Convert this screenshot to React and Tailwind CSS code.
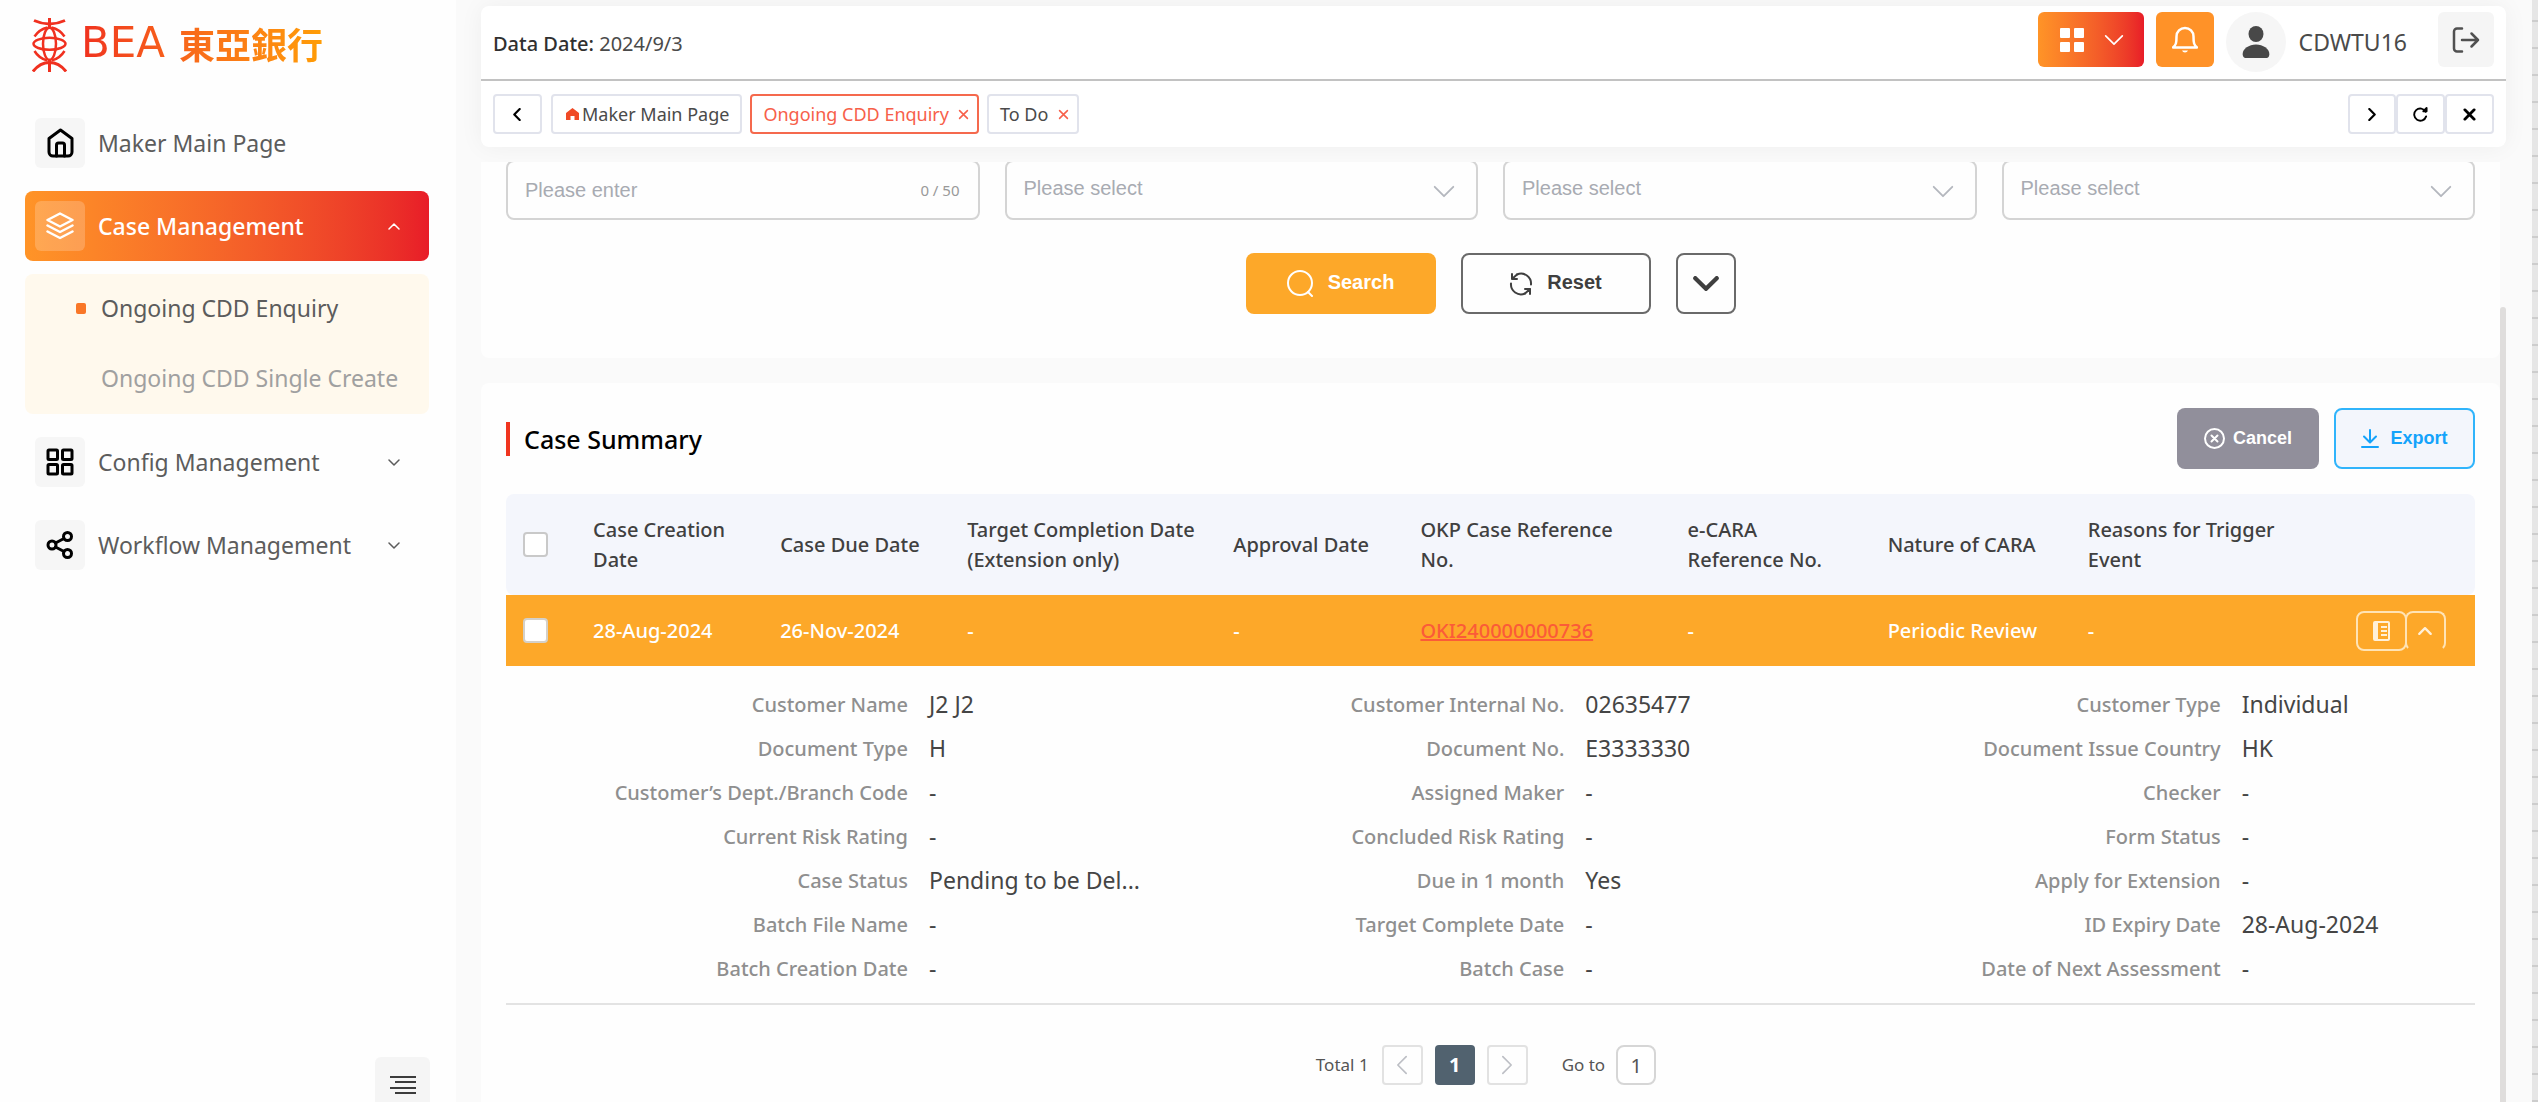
import React from "react";

const NOTO = "font-['Noto_Sans',sans-serif]";
const ARIAL = "font-['Liberation_Sans',Arial,sans-serif]";

function Svg({ className, box = "0 0 24 24", sw = 2, fill = "none", children }) {
  return (
    <svg
      aria-hidden="true"
      className={className}
      viewBox={box}
      fill={fill}
      stroke="currentColor"
      strokeWidth={sw}
      strokeLinecap="round"
      strokeLinejoin="round"
    >
      {children}
    </svg>
  );
}

const ChevronUp = ({ className, sw = 2 }) => (
  <Svg className={className} box="0 0 24 14" sw={sw}><path d="M2 12 12 2l10 10" /></Svg>
);
const ChevronDown = ({ className, sw = 2 }) => (
  <Svg className={className} box="0 0 24 14" sw={sw}><path d="m2 2 10 10L22 2" /></Svg>
);
const ChevronLeft = ({ className, sw = 2 }) => (
  <Svg className={className} box="0 0 14 24" sw={sw}><path d="M12 2 2 12l10 10" /></Svg>
);
const ChevronRight = ({ className, sw = 2 }) => (
  <Svg className={className} box="0 0 14 24" sw={sw}><path d="m2 2 10 10L2 22" /></Svg>
);

const HomeIcon = () => (
  <Svg className="h-[30px] w-[27px]" box="0 0 27 30" sw={3}>
    <path d="M2 10.500 13.500 2 25 10.500V24a4 4 0 0 1-4 4H6a4 4 0 0 1-4-4Z" />
    <path d="M9.500 28V17a2 2 0 0 1 2-2h4a2 2 0 0 1 2 2v11" />
  </Svg>
);
const LayersIcon = () => (
  <Svg className="h-7 w-7" box="0 0 28 28" sw={2.500}>
    <path d="M14 1.500 26.500 8 14 14.500 1.500 8Z" />
    <path d="m1.500 13.500 12.500 6.500 12.500-6.500" />
    <path d="m1.500 19.500 12.500 6.500 12.500-6.500" />
  </Svg>
);
const GridIcon = () => (
  <Svg className="h-7 w-7" box="0 0 28 28" sw={3}>
    <rect x="2" y="2" width="9.500" height="9.500" rx="1" />
    <rect x="16.500" y="2" width="9.500" height="9.500" rx="1" />
    <rect x="2" y="16.500" width="9.500" height="9.500" rx="1" />
    <rect x="16.500" y="16.500" width="9.500" height="9.500" rx="1" />
  </Svg>
);
const ShareIcon = () => (
  <Svg className="h-7 w-7" box="0 0 28 28" sw={3}>
    <circle cx="21.500" cy="5.500" r="4" />
    <circle cx="6" cy="14" r="4" />
    <circle cx="21.500" cy="22.500" r="4" />
    <path d="m9.500 12 8.500-4.500M9.500 16l8.500 4.500" />
  </Svg>
);

function Logo() {
  return (
    <div className="flex h-[54px] items-center pl-8">
      <svg aria-hidden="true" className="h-[54px] w-[35px] text-[#f0301f]" viewBox="0 0 35 54" fill="none" stroke="currentColor" strokeWidth="2.5">
        <path d="M2 2.500Q17.500 9.500 33 2.500" strokeWidth="3" />
        <path d="M17.500 0v10M17.500 42v12" strokeWidth="3" />
        <path d="M2.500 18.500C5.500 14 9 11 15.500 9.500M32.500 18.500C29.500 14 26 11 19.500 9.500" />
        <path d="M2.500 33C5.500 38 9 41 15.500 42.500M32.500 33C29.500 38 26 41 19.500 42.500" />
        <ellipse cx="17.500" cy="25.800" rx="16" ry="6" />
        <ellipse cx="17.500" cy="25.800" rx="6.500" ry="16" />
        <path d="M1 53.500C6 47 11 44.500 17.500 44.500S29 47 34 53.500" strokeWidth="3" />
      </svg>
      <div className="mb-1 ml-[14px] flex items-center gap-[14px] bg-linear-to-r from-[#f0301f] to-[#ff9d05] bg-clip-text text-transparent">
        <span className="font-['DejaVu_Sans',sans-serif] text-[42px] leading-[52px]">BEA</span>
        <span className="font-['Noto_Sans_CJK_TC',sans-serif] text-[36px] leading-[52px] font-bold">東亞銀行</span>
      </div>
    </div>
  );
}

function MenuItem({ icon, label, chevron, active }) {
  return (
    <button
      type="button"
      className={
        active
          ? "flex h-[70px] w-full items-center rounded-lg bg-linear-to-r from-[#ff9427] to-[#e81c28] pr-[29px] pl-[10px] font-medium text-white"
          : "flex h-[70px] w-full items-center rounded-lg pr-[29px] pl-[10px] text-[#5c5c5c]"
      }
    >
      <span
        className={
          active
            ? "flex h-[50px] w-[50px] items-center justify-center rounded-md bg-white/20"
            : "flex h-[50px] w-[50px] items-center justify-center rounded-md bg-[#f6f6f6] text-black"
        }
      >
        {icon}
      </span>
      <span className="ml-[13px] flex-1 text-left text-[23px]">{label}</span>
      {chevron === "up" && <ChevronUp className="h-[7px] w-3" sw={3} />}
      {chevron === "down" && <ChevronDown className="h-[7px] w-3" sw={3} />}
    </button>
  );
}

function Sidebar() {
  return (
    <aside className="flex w-[456px] shrink-0 flex-col overflow-hidden bg-[#fefefe] pt-[18px]">
      <Logo />
      <nav className="mt-9 flex flex-col gap-[13px] pr-[27px] pl-[25px]">
        <MenuItem icon={<HomeIcon />} label="Maker Main Page" />
        <MenuItem icon={<LayersIcon />} label="Case Management" chevron="up" active />
        <ul className="rounded-lg bg-[#fff9ed] text-[23px]">
          <li>
            <a href="#enquiry" className="flex h-[70px] items-center pb-[2px] text-[#5c5c5c]">
              <span className="ml-[51px] h-[11px] w-[10px] rounded-xs bg-[#f97727]" />
              <span className="ml-[15px]">Ongoing CDD Enquiry</span>
            </a>
          </li>
          <li>
            <a href="#create" className="flex h-[70px] items-center pb-[2px] pl-[76px] text-[#a0a0a0]">Ongoing CDD Single Create</a>
          </li>
        </ul>
        <MenuItem icon={<GridIcon />} label="Config Management" chevron="down" />
        <MenuItem icon={<ShareIcon />} label="Workflow Management" chevron="down" />
      </nav>
      <button type="button" aria-label="Collapse menu" className="mt-auto mr-[26px] -mb-[10px] flex h-[55px] w-[55px] shrink-0 items-center justify-center self-end rounded-md bg-[#f5f5f5] text-[#3c3c3c]">
        <svg aria-hidden="true" className="h-[18px] w-[26px]" viewBox="0 0 26 18" stroke="currentColor" strokeWidth="2">
          <path d="M0 1h26M5 6h21M0 12h26M5 17h21" />
        </svg>
      </button>
    </aside>
  );
}

function Header() {
  return (
    <header className="mt-[6px] shrink-0 rounded-lg bg-white shadow-[0_0_24px_rgba(0,0,0,0.05)]">
      <div className="flex h-[75px] items-start border-b-2 border-[#c2c2c2] px-3 pt-[6px]">
        <p className="mt-4 text-xl leading-8 text-[#4a4a4a]">
          <span className="font-medium text-[#303030]">Data Date:</span> 2024/9/3
        </p>
        <div className="ml-auto flex items-start text-white">
          <button type="button" aria-label="Applications" className="flex h-[55px] w-[106px] items-center gap-5 rounded-md bg-linear-to-r from-[#ff9427] to-[#e81c28] pl-[22px]">
            <svg aria-hidden="true" className="h-6 w-6" viewBox="0 0 24 24" fill="currentColor">
              <rect width="10" height="10" rx="1" />
              <rect x="14" width="10" height="10" rx="1" />
              <rect y="14" width="10" height="10" rx="1" />
              <rect x="14" y="14" width="10" height="10" rx="1" />
            </svg>
            <ChevronDown className="h-3 w-5" />
          </button>
          <button type="button" aria-label="Notifications" className="ml-3 flex h-[55px] w-[58px] items-center justify-center rounded-md bg-[#ff9228]">
            <svg aria-hidden="true" className="h-7 w-[26px]" viewBox="0 0 26 28" fill="none" stroke="currentColor" strokeWidth="2.5" strokeLinejoin="round">
              <path d="M1 21.500h24c-3-2.500-3.500-4.500-3.500-11A8.500 8.500 0 0 0 13 2a8.500 8.500 0 0 0-8.500 8.500c0 6.500-.5 8.500-3.500 11Z" />
              <path d="M10 24.500a3.200 3 0 0 0 6 0Z" fill="currentColor" stroke="none" />
            </svg>
          </button>
          <span className="ml-3 flex h-[60px] w-[60px] items-center justify-center rounded-full bg-[#f6f6f6] text-[#484848]">
            <svg aria-hidden="true" className="h-8 w-7" viewBox="0 0 28 32" fill="currentColor">
              <ellipse cx="14" cy="8" rx="7.500" ry="8" />
              <path d="M1 30c-2-6 5-11.500 13-11.500S29 24 27 30c-.5 1.500-1.500 2-3 2H4c-1.500 0-2.500-.5-3-2Z" />
            </svg>
          </span>
          <span className="mt-[14px] ml-[13px] text-[23px] leading-8 text-[#4a4a4a]">CDWTU16</span>
          <button type="button" aria-label="Log out" className="ml-[31px] flex h-[55px] w-14 items-center justify-center rounded-md bg-[#f5f5f5] text-[#505050]">
            <Svg className="h-[26px] w-7" box="0 0 28 26" sw={2.500}>
              <path d="M10 1.500H5a3 3 0 0 0-3 3v17a3 3 0 0 0 3 3h5M10 13h16M19.500 6.500 26 13l-6.500 6.500" />
            </Svg>
          </button>
        </div>
      </div>
      <div className="flex h-[66px] items-center px-3 text-lg">
        <button type="button" aria-label="Scroll tabs left" className="flex h-10 w-[49px] items-center justify-center rounded border-2 border-[#e1e3ec] pr-[2px] text-black">
          <ChevronLeft className="h-[13px] w-2" sw={4} />
        </button>
        <a href="#main" className="ml-[9px] flex h-10 items-center rounded border-2 border-[#e1e3ec] px-[11px] pl-[13px] text-[#4a4a4a]">
          <svg aria-hidden="true" className="mr-[3px] h-3 w-[13px] text-[#f04a26]" viewBox="0 0 13 12" fill="currentColor">
            <path d="M6.500 0 0 5v7h4.500V8h4v4H13V5Z" />
          </svg>
          Maker Main Page
        </a>
        <div className="ml-2 flex h-10 items-center rounded border-2 border-[#f5694d] px-2 pl-[11px] text-[#f7604a]">
          <a href="#enquiry">Ongoing CDD Enquiry</a>
          <button type="button" aria-label="Close Ongoing CDD Enquiry" className="ml-[9px]">
            <Svg className="h-[11px] w-[11px]" box="0 0 14 14"><path d="m2 2 10 10M12 2 2 12" /></Svg>
          </button>
        </div>
        <div className="ml-2 flex h-10 items-center rounded border-2 border-[#e1e3ec] px-2 pl-[11px] text-[#4a4a4a]">
          <a href="#todo">To Do</a>
          <button type="button" aria-label="Close To Do" className="ml-[10px] text-[#f7604a]">
            <Svg className="h-[11px] w-[11px]" box="0 0 14 14"><path d="m2 2 10 10M12 2 2 12" /></Svg>
          </button>
        </div>
        <div className="ml-auto flex text-black">
          <button type="button" aria-label="Scroll tabs right" className="flex h-10 w-12 items-center justify-center rounded border-2 border-[#e1e3ec]">
            <ChevronRight className="h-[13px] w-2" sw={4} />
          </button>
          <button type="button" aria-label="Reload tab" className="flex h-10 w-[49px] items-center justify-center rounded border-2 border-[#e1e3ec]">
            <Svg className="h-[15px] w-[15px]" box="0 0 16 16"><path d="M13.500 5A6.500 6.500 0 1 0 14 10" /><path d="M11 4.500h3.500V1Z" fill="currentColor" sw={1} /></Svg>
          </button>
          <button type="button" aria-label="Close all tabs" className="flex h-10 w-[49px] items-center justify-center rounded border-2 border-[#e1e3ec]">
            <Svg className="h-[13px] w-[13px]" box="0 0 14 14" sw={3}><path d="m2 2 10 10M12 2 2 12" /></Svg>
          </button>
        </div>
      </div>
    </header>
  );
}

function SelectBox({ label }) {
  return (
    <div className={"relative " + ARIAL}>
      <select aria-label={label} className="h-[60px] w-full appearance-none rounded-lg border-2 border-[#d4d4d4] bg-transparent px-[17px] pb-1 text-xl text-[#a8abb2]">
        <option>Please select</option>
      </select>
      <ChevronDown className="pointer-events-none absolute top-[25px] right-[22px] h-[13px] w-6 text-[#b4b7be]" />
    </div>
  );
}

function SearchCard() {
  return (
    <section className="rounded-b-lg bg-[#fefefe] px-[25px] pb-11">
      <form className="-mt-[2px]">
        <div className="grid grid-cols-4 gap-[25px]">
          <div className={"relative " + ARIAL}>
            <input aria-label="Keyword" placeholder="Please enter" className="h-[60px] w-full rounded-lg border-2 border-[#d4d4d4] bg-transparent px-[17px] text-xl placeholder:text-[#a8abb2]" />
            <span className={"pointer-events-none absolute top-5 right-5 text-[15px] leading-5 text-[#999999] " + NOTO}>0 / 50</span>
          </div>
          <SelectBox label="Filter one" />
          <SelectBox label="Filter two" />
          <SelectBox label="Filter three" />
        </div>
        <div className={"mt-[33px] flex justify-center gap-[25px] text-xl font-bold " + ARIAL}>
          <button type="button" className="flex h-[61px] w-[190px] items-center justify-center gap-[14px] rounded-lg bg-[#fda829] text-white">
            <Svg className="h-[27px] w-[27px]" box="0 0 27 27"><circle cx="13" cy="13" r="12" /><path d="m21 22 4 4" /></Svg>
            <span className="pb-[3px]">Search</span>
          </button>
          <button type="button" className="flex h-[61px] w-[190px] items-center justify-center gap-[14px] rounded-lg border-2 border-[#6a6a6a] text-[#3f3f3f]">
            <Svg className="h-6 w-6" box="0 0 24 24">
              <path d="M8 2.500A10 10 0 0 1 22 12.500M16 21.500A10 10 0 0 1 2 11.500" />
              <path d="M3 2v5h5M3 7l5-4.500M21 22v-5h-5M21 17l-5 4.500" />
            </Svg>
            <span className="pb-[3px]">Reset</span>
          </button>
          <button type="button" aria-label="More filters" className="flex h-[61px] w-[60px] items-center justify-center rounded-lg border-2 border-[#6a6a6a] text-[#3f3f3f]">
            <ChevronDown className="h-[15px] w-[26px]" sw={4} />
          </button>
        </div>
      </form>
    </section>
  );
}

const DETAILS = [
  ["Customer Name", "J2 J2"], ["Customer Internal No.", "02635477"], ["Customer Type", "Individual"],
  ["Document Type", "H"], ["Document No.", "E3333330"], ["Document Issue Country", "HK"],
  ["Customer’s Dept./Branch Code", "-"], ["Assigned Maker", "-"], ["Checker", "-"],
  ["Current Risk Rating", "-"], ["Concluded Risk Rating", "-"], ["Form Status", "-"],
  ["Case Status", "Pending to be Del..."], ["Due in 1 month", "Yes"], ["Apply for Extension", "-"],
  ["Batch File Name", "-"], ["Target Complete Date", "-"], ["ID Expiry Date", "28-Aug-2024"],
  ["Batch Creation Date", "-"], ["Batch Case", "-"], ["Date of Next Assessment", "-"],
];

function CaseTable() {
  return (
    <table className="mt-[25px] w-full table-fixed border-separate border-spacing-0 text-left text-xl leading-[30px]">
      <colgroup>
        <col className="w-[70px]" />
        <col className="w-[187px]" />
        <col className="w-[187px]" />
        <col className="w-[266px]" />
        <col className="w-[187px]" />
        <col className="w-[267px]" />
        <col className="w-[200px]" />
        <col className="w-[200px]" />
        <col className="w-[268px]" />
        <col className="w-[136px]" />
      </colgroup>
      <thead>
        <tr className="h-[101px] bg-[#f4f6fc] text-[#404040] [&>th]:px-[17px] [&>th]:font-medium">
          <th className="rounded-l-lg">
            <input type="checkbox" aria-label="Select all cases" className="block h-[25px] w-[25px] appearance-none rounded border-2 border-[#c9c9c9] bg-white" />
          </th>
          <th>Case Creation Date</th>
          <th>Case Due Date</th>
          <th>Target Completion Date (Extension only)</th>
          <th>Approval Date</th>
          <th>OKP Case Reference<br />No.</th>
          <th>e-CARA<br />Reference No.</th>
          <th>Nature of CARA</th>
          <th>Reasons for Trigger Event</th>
          <th className="rounded-r-lg" aria-label="Actions" />
        </tr>
      </thead>
      <tbody>
        <tr className="h-[71px] bg-[#fda829] font-medium text-white [&>td]:px-[17px]">
          <td>
            <input type="checkbox" aria-label="Select case OKI240000000736" className="block h-[25px] w-[25px] appearance-none rounded border-2 border-[#d4d0c8] bg-white" />
          </td>
          <td>28-Aug-2024</td>
          <td>26-Nov-2024</td>
          <td>-</td>
          <td>-</td>
          <td><a href="#case" className="text-[#fb5b38] underline decoration-2">OKI240000000736</a></td>
          <td>-</td>
          <td>Periodic Review</td>
          <td>-</td>
          <td>
            <div className="flex text-[#fff0d8]">
              <button type="button" aria-label="Open case" className="flex h-10 w-[51px] items-center justify-center rounded-lg border-2 border-[#ffe3b4]">
                <svg aria-hidden="true" className="h-5 w-[17px]" viewBox="0 0 17 20" fill="none" stroke="currentColor" strokeWidth="2">
                  <rect x="1" y="1" width="15" height="18" rx="1" />
                  <path d="M3 1v18" strokeWidth="4" />
                  <path d="M8 6h6M8 10h6M8 14h6" />
                </svg>
              </button>
              <button type="button" aria-label="Collapse case" className="-ml-[2px] flex h-10 w-[41px] items-center justify-center rounded-lg border-2 border-[#ffe3b4] border-b-transparent">
                <ChevronUp className="h-2 w-[14px]" sw={4} />
              </button>
            </div>
          </td>
        </tr>
        <tr>
          <td colSpan={10} className="border-b-2 border-[#e3e3e3] pt-[17px] pb-3">
            <dl className="grid grid-cols-3">
              {DETAILS.map(([label, value]) => (
                <div key={label} className="flex h-11 items-center">
                  <dt className="w-[402px] text-right font-medium text-[#8f8f8f]">{label}</dt>
                  <dd className="ml-[21px] pb-[2px] text-[23px] text-[#454545]">{value}</dd>
                </div>
              ))}
            </dl>
          </td>
        </tr>
      </tbody>
    </table>
  );
}

function Pagination() {
  return (
    <nav aria-label="Pages" className="mt-10 flex items-center justify-center pr-[9px] text-[17px] text-[#555555]">
      <span>Total 1</span>
      <button type="button" aria-label="Previous page" className="ml-[13px] flex h-10 w-[41px] items-center justify-center rounded border-2 border-[#e2e2e2] text-[#bdbfc5]">
        <ChevronLeft className="h-[20px] w-3" />
      </button>
      <button type="button" className="ml-3 flex h-10 w-10 items-center justify-center rounded bg-[#51626f] text-xl font-bold text-white">1</button>
      <button type="button" aria-label="Next page" className="ml-3 flex h-10 w-[41px] items-center justify-center rounded border-2 border-[#e2e2e2] text-[#bdbfc5]">
        <ChevronRight className="h-[20px] w-3" />
      </button>
      <label htmlFor="goto" className="ml-[34px]">Go to</label>
      <input id="goto" defaultValue="1" className="ml-[11px] h-10 w-10 rounded-lg border-2 border-[#d6d6d6] bg-white text-center text-xl text-[#555555]" />
    </nav>
  );
}

function CaseSummary() {
  return (
    <section className="mt-[25px] rounded-t-lg bg-[#fefefe] px-[25px] pt-[25px] pb-10">
      <div className="flex items-center">
        <h2 className="border-l-4 border-[#f0351f] pl-[14px] text-[25px] leading-[34px] font-medium text-black">Case Summary</h2>
        <div className={"ml-auto flex gap-[15px] text-lg font-bold " + ARIAL}>
          <button type="button" className="flex h-[61px] w-[142px] items-center justify-center gap-2 rounded-lg bg-[#918f9b] text-white">
            <Svg className="h-[21px] w-[21px]" box="0 0 21 21"><circle cx="10.500" cy="10.500" r="9.500" /><path d="m7.500 7.500 6 6M13.500 7.500l-6 6" /></Svg>
            <span className="pb-[2px]">Cancel</span>
          </button>
          <button type="button" className="flex h-[61px] w-[141px] items-center justify-center gap-[11px] rounded-lg border-2 border-[#30b4fb] bg-[#f3f6fc] text-[#14a3fb]">
            <Svg className="h-[19px] w-[18px]" box="0 0 18 19"><path d="M9 1v12M3 7.500l6 6 6-6M1 18h16" /></Svg>
            <span className="pb-[2px]">Export</span>
          </button>
        </div>
      </div>
      <CaseTable />
      <Pagination />
    </section>
  );
}

export default function App() {
  return (
    <div className={"flex h-screen overflow-hidden bg-[#fafafa] " + NOTO}>
      <Sidebar />
      <div className="flex min-w-0 flex-1 flex-col pr-[26px] pl-[25px]">
        <Header />
        <div className="mt-[15px] flex min-h-0 flex-1 overflow-hidden">
          <main className="min-w-0 flex-1">
            <SearchCard />
            <CaseSummary />
          </main>
          <div className="mt-[145px] w-[6px] shrink-0 rounded-t-full bg-[#dfdddc]" />
        </div>
      </div>
      <div className="w-[6px] shrink-0 bg-[repeating-linear-gradient(to_bottom,#e6e6e6_0px,#e6e6e6_20px,#cdcdcd_20px,#cdcdcd_22px,#e6e6e6_22px,#e6e6e6_27px)]" />
    </div>
  );
}
